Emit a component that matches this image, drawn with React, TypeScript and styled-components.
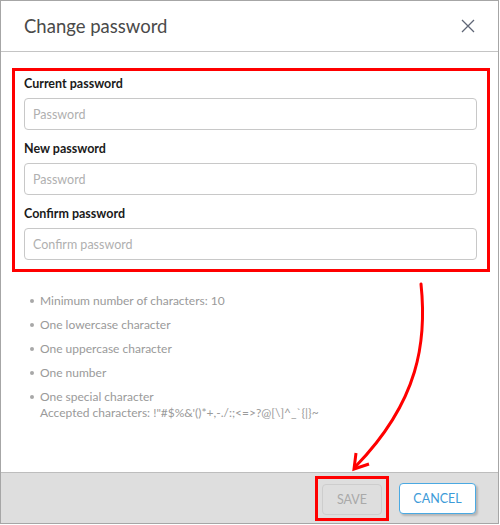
import styled, { createGlobalStyle } from 'styled-components';

const GlobalStyle = createGlobalStyle`
  html, body {
    margin: 0;
    padding: 0;
    background: #ffffff;
  }
  body {
    font-family: Lato, "Noto Sans", sans-serif;
  }
`;

const Dialog = styled.div`
  position: relative;
  box-sizing: border-box;
  width: 499px;
  height: 524px;
  border: 1px solid #a6a6a6;
  background: #ffffff;
  display: flex;
  flex-direction: column;
`;

const Header = styled.div`
  height: 50px;
  border-bottom: 1px solid #c4c4c4;
  display: flex;
  align-items: center;
  justify-content: space-between;
  padding: 0 22px 0 23px;
`;

const Title = styled.h1`
  margin: 0;
  font-size: 18.5px;
  font-weight: 400;
  color: #4a4a4a;
`;

const CloseButton = styled.button`
  border: none;
  background: none;
  padding: 0;
  width: 16px;
  height: 16px;
  display: flex;
  align-items: center;
  justify-content: center;
  cursor: pointer;
`;

const Body = styled.div`
  flex: 1;
  display: flex;
  flex-direction: column;
  padding: 16px 8px 0 11px;
`;

const Highlight = styled.div`
  border: 3px solid #ff0000;
  padding: 4px 10px 9px 9px;
  display: flex;
  flex-direction: column;
`;

const Field = styled.div<{ $first?: boolean }>`
  display: flex;
  flex-direction: column;
  margin-top: ${(p) => (p.$first ? '0' : '10px')};
`;

const Label = styled.label`
  font-size: 12.5px;
  font-weight: 700;
  color: #1a1a1a;
  line-height: 18px;
  margin-bottom: 5px;
`;

const Input = styled.input`
  box-sizing: border-box;
  height: 32px;
  width: 100%;
  border: 1px solid #c8c8c8;
  border-radius: 4px;
  padding: 0 8px;
  font-family: inherit;
  font-size: 12.5px;
  color: #333;
  background: #fff;
  outline: none;

  &::placeholder {
    color: #b0b0b0;
  }
`;

const Rules = styled.ul`
  margin: 21px 0 0;
  padding: 0 0 0 28px;
  list-style: none;
`;

const Rule = styled.li`
  position: relative;
  font-size: 12px;
  color: #9a9a9a;
  line-height: 16px;
  margin-bottom: 8px;

  &::before {
    content: '';
    position: absolute;
    left: -10px;
    top: 6px;
    width: 4px;
    height: 4px;
    border-radius: 50%;
    background: #a8a8a8;
  }
`;

const Footer = styled.div`
  height: 50px;
  border-top: 1px solid #bdbdbd;
  background: #dedede;
  display: flex;
  align-items: center;
  justify-content: flex-end;
  gap: 10px;
  padding-right: 22px;
`;

const SaveFrame = styled.span`
  display: flex;
  border: 3px solid #ff0000;
  padding: 5px 4px 3px;
`;

const Button = styled.button<{ $primary?: boolean }>`
  box-sizing: border-box;
  height: 31px;
  width: ${(p) => (p.$primary ? '77px' : '60px')};
  padding: 0;
  border-radius: 4px;
  font-family: inherit;
  font-size: 12.5px;
  text-transform: uppercase;
  border: 1px solid ${(p) => (p.$primary ? '#4aa9e2' : '#cdcdcd')};
  color: ${(p) => (p.$primary ? '#3d9bd8' : '#a9a9a9')};
  background: ${(p) => (p.$primary ? '#ffffff' : '#dedede')};
  box-shadow: ${(p) => (p.$primary ? '2px 2px 2px rgba(0, 0, 0, 0.18)' : 'none')};
  cursor: ${(p) => (p.$primary ? 'pointer' : 'default')};
`;

const Annotation = styled.svg`
  position: absolute;
  left: 0;
  top: 0;
  pointer-events: none;
`;

const rules = [
  'Minimum number of characters: 10',
  'One lowercase character',
  'One uppercase character',
  'One number',
];

export default function App() {
  return (
    <>
      <GlobalStyle />
      <Dialog>
        <Header>
          <Title>Change password</Title>
          <CloseButton aria-label="Close">
            <svg width="14" height="14" viewBox="0 0 14 14">
              <path d="M1 1 L13 13 M13 1 L1 13" stroke="#5f6676" strokeWidth="1.3" fill="none" />
            </svg>
          </CloseButton>
        </Header>
        <Body>
          <Highlight>
            <Field $first>
              <Label>Current password</Label>
              <Input type="password" placeholder="Password" />
            </Field>
            <Field>
              <Label>New password</Label>
              <Input type="password" placeholder="Password" />
            </Field>
            <Field>
              <Label>Confirm password</Label>
              <Input type="password" placeholder="Confirm password" />
            </Field>
          </Highlight>
          <Rules>
            {rules.map((r) => (
              <Rule key={r}>{r}</Rule>
            ))}
            <Rule>
              One special character
              <br />
              Accepted characters: !"#$%&amp;'()*+,-./:;&lt;=&gt;?@[\]^_`{'{|}'}~
            </Rule>
          </Rules>
        </Body>
        <Footer>
          <SaveFrame>
            <Button disabled>Save</Button>
          </SaveFrame>
          <Button $primary>Cancel</Button>
        </Footer>
        <Annotation width="499" height="524" viewBox="0 0 499 524">
          <path
            d="M420 283 C426 340 418 400 355 465"
            stroke="#ff0000"
            strokeWidth="3"
            fill="none"
            strokeLinecap="round"
          />
          <polyline
            points="355,452 353,468 368,463"
            stroke="#ff0000"
            strokeWidth="3"
            fill="none"
            strokeLinejoin="miter"
          />
        </Annotation>
      </Dialog>
    </>
  );
}
